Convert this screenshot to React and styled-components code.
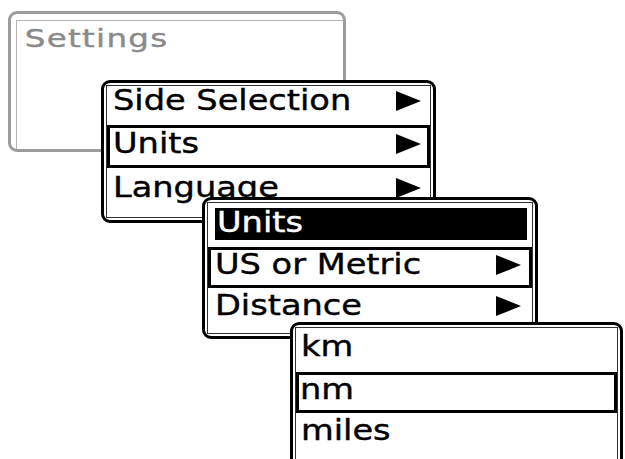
import React from 'react'
import styled, { createGlobalStyle } from 'styled-components'

const GlobalStyle = createGlobalStyle`
    html, body {
        margin: 0;
        padding: 0;
        background: #fff;
    }
    body {
        font-family: "DejaVu Sans", Verdana, sans-serif;
        color: #000;
    }
`

function Arrow() {
    return (
        <ArrowSvg viewBox="0 0 25 20" width="25" height="20">
            <polygon points="0,0 25,10 0,20" fill="#000" />
        </ArrowSvg>
    )
}

function MenuRow({ label, selected, arrow, height, pad, padRight, lift = 6 }) {
    return (
        <Row
            $selected={selected}
            $h={height}
            $pad={pad}
            $padRight={padRight}
            $lift={lift}
        >
            <Label>{label}</Label>
            {arrow && <Arrow />}
        </Row>
    )
}

function App() {
    return (
        <>
            <GlobalStyle />
            <Desktop>
                <Window $x={8} $y={11} $w={338} $h={141} $grey>
                    <Frame $grey>
                        <Heading>Settings</Heading>
                    </Frame>
                </Window>

                <Window $x={101} $y={80} $w={335} $h={143}>
                    <Frame>
                        <MenuRow label="Side Selection" arrow height={39} pad={3} padRight={6} lift={10} />
                        <MenuRow label="Units" arrow selected height={43} pad={3} padRight={6} />
                        <MenuRow label="Language" arrow height={44} pad={3} padRight={6} lift={4} />
                    </Frame>
                </Window>

                <Window $x={202} $y={197} $w={336} $h={142}>
                    <Frame>
                        <TitleBar>
                            <Label>Units</Label>
                        </TitleBar>
                        <MenuRow label="US or Metric" arrow selected height={41} pad={4} padRight={8} />
                        <MenuRow label="Distance" arrow height={42} pad={4} padRight={8} />
                    </Frame>
                </Window>

                <Window $x={290} $y={322} $w={333} $h={160}>
                    <Frame>
                        <MenuRow label="km" height={44} pad={2} />
                        <MenuRow label="nm" selected height={41} pad={1} />
                        <MenuRow label="miles" height={42} pad={2} />
                    </Frame>
                </Window>
            </Desktop>
        </>
    )
}

export default App

const Desktop = styled.div`
    position: relative;
    width: 625px;
    height: 459px;
    overflow: hidden;
    background: #fff;
`

const Window = styled.div`
    position: absolute;
    left: ${(p) => p.$x}px;
    top: ${(p) => p.$y}px;
    width: ${(p) => p.$w}px;
    height: ${(p) => p.$h}px;
    box-sizing: border-box;
    background: #fff;
    border: 3px solid ${(p) => (p.$grey ? '#9c9c9c' : '#000')};
    border-radius: 9px;
    padding: ${(p) => (p.$grey ? '6px 0 0 5px' : '2px')};
`

const Frame = styled.div`
    height: 100%;
    box-sizing: border-box;
    display: flex;
    flex-direction: column;
    overflow: hidden;
    border-top: 1px solid ${(p) => (p.$grey ? '#b4b4b4' : '#333')};
    border-left: 1px solid ${(p) => (p.$grey ? '#b4b4b4' : '#333')};
    border-right: ${(p) => (p.$grey ? 'none' : '1px solid #333')};
    border-bottom: ${(p) => (p.$grey ? 'none' : '1px solid #333')};
`

const Label = styled.span`
    display: inline-block;
    font-size: 28px;
    line-height: 1;
    white-space: nowrap;
    -webkit-text-stroke: 0.4px currentColor;
    transform: scaleX(1.2);
    transform-origin: left center;
`

const Heading = styled(Label)`
    font-size: 25px;
    letter-spacing: 1px;
    color: #8a8a8a;
    padding: 5px 0 0 6px;
    transform: scaleX(1.3);
    transform-origin: left top;
    align-self: flex-start;
`

const Row = styled.div`
    flex-shrink: 0;
    display: flex;
    align-items: center;
    height: ${(p) => p.$h}px;
    box-sizing: border-box;
    border: 3px solid ${(p) => (p.$selected ? '#000' : 'transparent')};
    padding: 0 ${(p) => p.$padRight || 7}px ${(p) => p.$lift}px ${(p) => p.$pad}px;
`

const TitleBar = styled.div`
    flex-shrink: 0;
    display: flex;
    align-items: center;
    height: 32px;
    margin: 5px 5px 7px 7px;
    padding: 0 0 2px 2px;
    box-sizing: border-box;
    background: #000;
    color: #fff;
`

const ArrowSvg = styled.svg`
    margin-left: auto;
    flex-shrink: 0;
    display: block;
`
